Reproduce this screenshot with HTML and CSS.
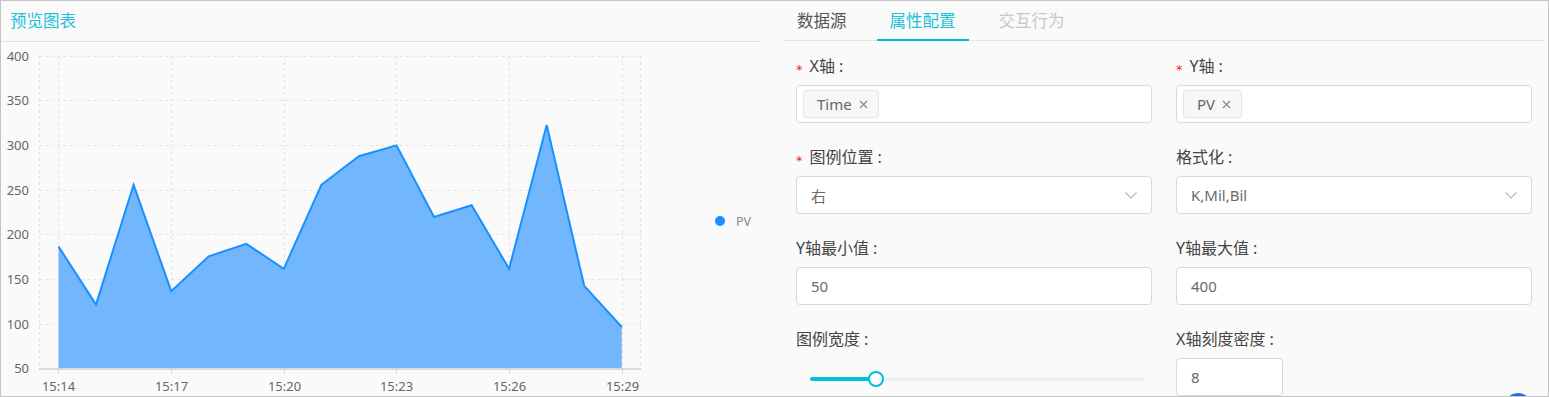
FILE: index.html
```html
<!DOCTYPE html>
<html lang="zh-CN">

<head>
  <meta charset="UTF-8">
  <meta name="viewport" content="width=device-width, initial-scale=1.0">
  <title>图表配置</title>
  <link rel="stylesheet" href="styles.css">
</head>

<body>
  <div class="frame">
    <section class="preview">
      <div class="preview-head">预览图表</div>
      <svg class="chart" width="759" height="354" viewBox="1 42 759 354">
        <!-- grid -->
        <g class="grid">
          <line x1="39.5" y1="56.5" x2="641" y2="56.5" />
          <line x1="39.5" y1="100.5" x2="641" y2="100.5" />
          <line x1="39.5" y1="145.5" x2="641" y2="145.5" />
          <line x1="39.5" y1="190.5" x2="641" y2="190.5" />
          <line x1="39.5" y1="234.5" x2="641" y2="234.5" />
          <line x1="39.5" y1="279.5" x2="641" y2="279.5" />
          <line x1="39.5" y1="324.5" x2="641" y2="324.5" />
          <line x1="39.5" y1="56" x2="39.5" y2="369" />
          <line x1="58.5" y1="56" x2="58.5" y2="369" />
          <line x1="171.5" y1="56" x2="171.5" y2="369" />
          <line x1="284.5" y1="56" x2="284.5" y2="369" />
          <line x1="396.5" y1="56" x2="396.5" y2="369" />
          <line x1="509.5" y1="56" x2="509.5" y2="369" />
          <line x1="622.5" y1="56" x2="622.5" y2="369" />
          <line x1="640.5" y1="56" x2="640.5" y2="369" />
        </g>

        <!-- series PV -->
        <polygon class="area" points="58.5,246.5 96,304.6 133.6,184.8 171.2,291.2 208.7,256.3 246.3,243.8 283.8,268.8 321.4,184.8 358.9,156.2 396.5,145.4 434,217 471.6,205.3 509.1,268.8 546.7,124.9 584.2,285.8 621.8,327 621.8,369 58.5,369" />
        <polyline class="line" points="58.5,246.5 96,304.6 133.6,184.8 171.2,291.2 208.7,256.3 246.3,243.8 283.8,268.8 321.4,184.8 358.9,156.2 396.5,145.4 434,217 471.6,205.3 509.1,268.8 546.7,124.9 584.2,285.8 621.8,327" />

        <!-- axes -->
        <rect class="axis" x="39" y="368" width="602" height="2" />
        <g class="ticks">
          <line x1="58.5" y1="369" x2="58.5" y2="374" />
          <line x1="171.5" y1="369" x2="171.5" y2="374" />
          <line x1="284.5" y1="369" x2="284.5" y2="374" />
          <line x1="396.5" y1="369" x2="396.5" y2="374" />
          <line x1="509.5" y1="369" x2="509.5" y2="374" />
          <line x1="622.5" y1="369" x2="622.5" y2="374" />
        </g>
        <g class="y-labels">
          <text x="29" y="61">400</text>
          <text x="29" y="105">350</text>
          <text x="29" y="150">300</text>
          <text x="29" y="195">250</text>
          <text x="29" y="239">200</text>
          <text x="29" y="284">150</text>
          <text x="29" y="329">100</text>
          <text x="29" y="373">50</text>
        </g>
        <g class="x-labels">
          <text x="58.5" y="391">15:14</text>
          <text x="171.5" y="391">15:17</text>
          <text x="284.5" y="391">15:20</text>
          <text x="396.5" y="391">15:23</text>
          <text x="509.5" y="391">15:26</text>
          <text x="622.5" y="391">15:29</text>
        </g>

        <!-- legend -->
        <circle class="legend-dot" cx="720" cy="221" r="5" />
        <text class="legend-text" x="736" y="225.5">PV</text>
      </svg>
    </section>

    <section class="config">
      <nav class="tabs">
        <span class="tab">数据源</span>
        <span class="tab active">属性配置</span>
        <span class="tab disabled">交互行为</span>
      </nav>

      <form class="form">
        <div class="field">
          <label class="label"><span class="req">*</span>X轴</label>
          <div class="input tags">
            <span class="tag">Time
              <svg class="tag-close" width="9" height="9" viewBox="0 0 9 9"><path d="M1 1L8 8M8 1L1 8" /></svg>
            </span>
          </div>
        </div>
        <div class="field">
          <label class="label"><span class="req">*</span>Y轴</label>
          <div class="input tags">
            <span class="tag">PV
              <svg class="tag-close" width="9" height="9" viewBox="0 0 9 9"><path d="M1 1L8 8M8 1L1 8" /></svg>
            </span>
          </div>
        </div>

        <div class="field">
          <label class="label"><span class="req">*</span>图例位置</label>
          <div class="input select">
            <span>右</span>
            <svg class="arrow" width="12" height="7" viewBox="0 0 12 7"><polyline points="0.5,0.5 6,6 11.5,0.5" /></svg>
          </div>
        </div>
        <div class="field">
          <label class="label">格式化</label>
          <div class="input select">
            <span>K,Mil,Bil</span>
            <svg class="arrow" width="12" height="7" viewBox="0 0 12 7"><polyline points="0.5,0.5 6,6 11.5,0.5" /></svg>
          </div>
        </div>

        <div class="field">
          <label class="label">Y轴最小值</label>
          <div class="input">50</div>
        </div>
        <div class="field">
          <label class="label">Y轴最大值</label>
          <div class="input">400</div>
        </div>

        <div class="field">
          <label class="label">图例宽度</label>
          <div class="slider">
            <div class="slider-track">
              <div class="slider-fill" style="width: 66px"></div>
              <span class="slider-handle" style="left: 66px"></span>
            </div>
          </div>
        </div>
        <div class="field">
          <label class="label">X轴刻度密度</label>
          <div class="input small">8</div>
        </div>
      </form>
    </section>

    <span class="fab"></span>
  </div>
</body>

</html>
```

FILE: styles.css
```css
* {
  margin: 0;
  padding: 0;
  box-sizing: border-box;
}

body {
  font-family: 'Noto Sans', 'Noto Sans CJK SC', sans-serif;
  background: #fafafa;
  color: #333;
}

.frame {
  position: relative;
  display: flex;
  height: 397px;
  border: 1px solid #c4c4c4;
  background: #fafafa;
  overflow: hidden;
}

/* preview */

.preview {
  width: 759px;
  flex: none;
}

.preview-head {
  height: 41px;
  line-height: 40px;
  padding-left: 9px;
  border-bottom: 1px solid #e3e3e3;
  font-size: 16.5px;
  color: #1ec0da;
}

.chart {
  display: block;
  font-family: 'Noto Sans', sans-serif;
}

.grid line {
  stroke: #e3e3e3;
  stroke-width: 1;
  stroke-dasharray: 3 3;
}

.area {
  fill: #72b7fd;
}

.line {
  fill: none;
  stroke: #1890ff;
  stroke-width: 2;
}

.axis {
  fill: #dadada;
}

.ticks line {
  stroke: #d6d6d6;
  stroke-width: 1;
}

.y-labels text {
  font-size: 13px;
  fill: #666;
  text-anchor: end;
}

.x-labels text {
  font-size: 13px;
  fill: #666;
  text-anchor: middle;
}

.legend-dot {
  fill: #1890ff;
}

.legend-text {
  font-size: 12.5px;
  fill: #888;
}

/* config */

.config {
  flex: 1;
  padding: 0 3px 0 24px;
}

.tabs {
  display: flex;
  gap: 17px;
  height: 40px;
  border-bottom: 1px solid #e6e6e6;
}

.tab {
  height: 40px;
  margin-bottom: -1px;
  padding: 0 13px;
  line-height: 40px;
  font-size: 16.5px;
  color: #555;
}

.tab.active {
  color: #1ec0da;
  box-shadow: inset 0 -2px 0 #00bcd8;
}

.tab.disabled {
  color: #c8c8c8;
}

.form {
  display: grid;
  grid-template-columns: 1fr 1fr;
  column-gap: 24px;
  row-gap: 23px;
  padding: 14px 13px 0 12px;
}

.label {
  display: block;
  height: 22px;
  line-height: 22px;
  margin-bottom: 8px;
  font-size: 16px;
  color: #454545;
}

.label::after {
  content: ':';
  margin-left: 4px;
}

.req {
  display: inline-block;
  margin-right: 7px;
  font-family: 'DejaVu Sans', sans-serif;
  font-size: 13px;
  color: #f5222d;
  vertical-align: -2px;
}

.input {
  display: flex;
  align-items: center;
  height: 38px;
  padding: 0 14px 0 14px;
  border: 1px solid #d9d9d9;
  border-radius: 4px;
  background: #fff;
  font-size: 15px;
  color: #6a6a6a;
}

.input.small {
  width: 107px;
}

.tags {
  padding-left: 6px;
}

.tag {
  display: flex;
  align-items: center;
  gap: 7px;
  height: 28px;
  padding: 0 10px 0 13px;
  border: 1px solid #e6e6e6;
  border-radius: 3px;
  background: #f7f7f7;
  color: #666;
}

.tag-close path {
  stroke: #888;
  stroke-width: 1.2;
  fill: none;
}

.select {
  justify-content: space-between;
}

.arrow polyline {
  fill: none;
  stroke: #b8b8b8;
  stroke-width: 1.2;
}

.slider {
  display: flex;
  align-items: center;
  height: 42px;
  padding: 0 7px 0 14px;
}

.slider-track {
  position: relative;
  flex: 1;
  height: 4px;
  border-radius: 2px;
  background: #efefef;
}

.slider-fill {
  height: 4px;
  border-radius: 2px;
  background: #00bfd9;
}

.slider-handle {
  position: absolute;
  top: -6px;
  width: 16px;
  height: 16px;
  margin-left: -8px;
  border: 2px solid #00bfd9;
  border-radius: 50%;
  background: #fff;
}

.fab {
  position: absolute;
  right: 16px;
  bottom: -25px;
  width: 28px;
  height: 28px;
  border-radius: 50%;
  background: #1e78d2;
}
```
